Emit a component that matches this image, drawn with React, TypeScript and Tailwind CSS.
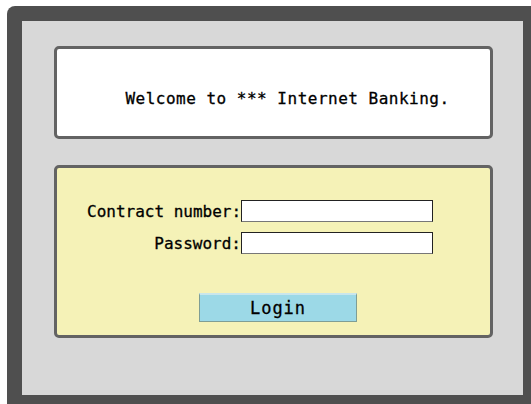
import React from 'react';

const mono = { fontFamily: '"DejaVu Sans Mono", "Liberation Mono", monospace' };

export default function App() {
    return (
        <div className="w-[531px] h-[404px] overflow-hidden bg-white" style={mono}>
            {/* dark outer frame runs past the window edges */}
            <div className="ml-[7px] mt-[6px] w-[531px] h-[410px] rounded-tl-[8px] bg-[#4f4f4f] p-[15px]">
                <div className="w-[501px] h-[374px] bg-[#d8d8d8] pt-[25px] pl-[32px]">
                    {/* welcome banner */}
                    <div className="w-[439px] h-[93px] rounded-[5px] border-[3px] border-[#636363] bg-white flex items-center justify-center pt-[12px] pl-[28px]">
                        <p className="text-[16px] text-black tracking-[0.5px] whitespace-nowrap [-webkit-text-stroke:0.3px_black]">Welcome to *** Internet Banking.</p>
                    </div>

                    {/* login form */}
                    <div className="mt-[26px] w-[439px] h-[173px] rounded-[5px] border-[3px] border-[#636363] bg-[#f5f2b7] pt-[32px] pl-[30px]">
                        <div className="grid grid-cols-[154px_192px] gap-y-[10px] items-center">
                            <label className="text-right text-[16px] text-black leading-none whitespace-nowrap pt-[2px] [-webkit-text-stroke:0.3px_black]">Contract number:</label>
                            <input className="h-[22px] border border-[#222] border-b-[#777] bg-white outline-none" />
                            <label className="text-right text-[16px] text-black leading-none whitespace-nowrap pt-[2px] [-webkit-text-stroke:0.3px_black]">Password:</label>
                            <input type="password" className="h-[22px] border border-[#222] border-b-[#777] bg-white outline-none" />
                        </div>
                        <div className="mt-[39px] pl-[112px]">
                            <button className="w-[158px] h-[29px] border border-[#7f9e94] border-t-[#c9e6ec] border-t-2 bg-[#9cd9e7] text-[17px] text-black leading-none tracking-[1px] [-webkit-text-stroke:0.3px_black]">
                                Login
                            </button>
                        </div>
                    </div>
                </div>
            </div>
        </div>
    );
}
